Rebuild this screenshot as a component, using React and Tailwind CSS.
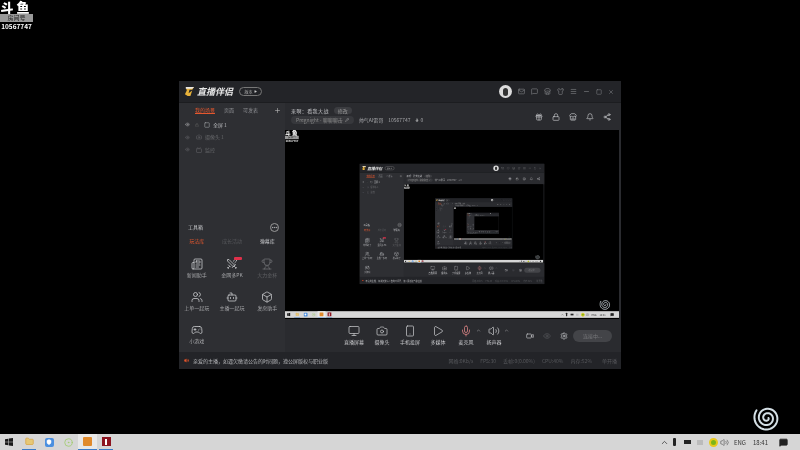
import {
  Bell, Box, Camera, Eye, Gamepad2, Gift, Lock, Mail, Menu, MessageSquare, Mic, Minus, Monitor, Newspaper,
  Pencil, Play, Plus, Settings, Share2, Shirt, Smartphone, Square, Store, Swords, Trophy, Users, Video,
  Volume2, X, Flame, Bot, ChevronUp, MessageSquareText, Ellipsis, Folder, Shield, CircleDot, Tv,
} from "lucide-react";

const FONT = "font-['Noto_Sans_CJK_SC','Noto_Sans',sans-serif]";

const tools = [
  { label: "新闻助手", icon: Newspaper },
  { label: "金网多PK", icon: Swords, badge: true },
  { label: "大力金杯", icon: Trophy, dim: true },
  { label: "上单一起玩", icon: Users },
  { label: "主播一起玩", icon: Bot },
  { label: "发房助手", icon: Box },
  { label: "小游戏", icon: Gamepad2 },
];

const controls = [
  { label: "直播屏幕", icon: Monitor },
  { label: "摄像头", icon: Camera },
  { label: "手机投屏", icon: Smartphone },
  { label: "多媒体", icon: Play },
];

// two and a half turns of an archimedean spiral
const spiralPoints = Array.from({ length: 120 }, (_, i) => {
  const a = (i / 119) * Math.PI * 5.2;
  const r = 1.5 + (i / 119) * 11.5;
  return `${(14 + r * Math.cos(a)).toFixed(2)},${(14 + r * Math.sin(a)).toFixed(2)}`;
}).join(" ");

function Spiral({ className }) {
  return (
    <svg viewBox="0 0 28 28" className={className} fill="none" stroke="#d5e0e6" strokeWidth="2" strokeLinecap="round">
      <polyline points={spiralPoints} />
    </svg>
  );
}

function Taskbar() {
  return (
    <div className="h-4 bg-[#d6d6d6] flex items-center justify-between shrink-0">
      <div className="flex items-center h-full">
        <svg viewBox="0 0 12 12" className="w-[8px] h-[8px] ml-[5px] mr-[6px]" fill="#1a1a1a">
          <path d="M0 1.700 5 1v4.500H0zM5.800.9 12 0v5.500H5.800zM0 6.300h5V11l-5-.7zM5.800 6.300H12V12l-6.200-.9z" />
        </svg>
        <div className="w-5 h-full flex items-center justify-center">
          <div className="w-[14px] h-full flex items-center justify-center border-b border-[#3a7bc8]">
            <Folder className="w-[9px] h-[9px] text-[#d9a441] fill-[#e6c877]" />
          </div>
        </div>
        <div className="w-5 h-full flex items-center justify-center">
          <div className="w-[9px] h-[9px] rounded-[2px] bg-[#4a8fe0] flex items-center justify-center">
            <Shield className="w-[6px] h-[6px] text-white fill-white" />
          </div>
        </div>
        <div className="w-[19px] h-full flex items-center justify-center">
          <CircleDot className="w-[9px] h-[9px] text-[#9ccc65]" />
        </div>
        <div className="w-[19px] h-full flex items-center justify-center bg-[#e8e8e8] border-b border-[#3a7bc8]">
          <div className="w-[9px] h-[9px] rounded-[1px] bg-[#e08a2c]" />
        </div>
        <div className="w-[14px] ml-[2px] h-full flex items-center justify-center border-b border-[#3a7bc8]">
          <div className="w-[9px] h-[9px] bg-[#8c1420] flex items-center justify-center">
            <div className="w-[2px] h-[6px] bg-white" />
          </div>
        </div>
      </div>
      <div className={`flex items-center text-[#333] text-[6px] ${FONT}`}>
        <ChevronUp className="w-[9px] h-[9px] mr-[4px]" />
        <div className="w-[3px] h-[8px] rounded-[1px] bg-[#222] mr-[8px]" />
        <div className="w-[7px] h-[4px] bg-[#222] mr-[6px]" />
        <div className="w-[6px] h-[5px] bg-[#bbb] mr-[6px]" />
        <div className="w-[9px] h-[9px] rounded-full bg-[#7cb518] border-2 border-[#e8c91c] mr-[2px]" />
        <Volume2 className="w-[9px] h-[9px] text-[#666] mr-[5px]" />
        <span className="mr-[7px]">ENG</span>
        <span className="mr-[11px]">18:41</span>
        <MessageSquareText className="w-[9px] h-[9px] text-[#222] fill-[#222] mr-[12px]" />
      </div>
    </div>
  );
}

function Sidebar() {
  return (
    <div className={`w-[106px] bg-[#2e2f33] flex flex-col shrink-0 ${FONT}`}>
      <div className="flex items-center h-[14px] pl-4 pr-[3px] text-[5px] text-[#8d8e92]">
        <span className="text-[#e4572e] border-b border-[#e4572e] mr-[9px]">我的场景</span>
        <span className="mr-[9px]">页面</span>
        <span>可发表</span>
        <Plus className="w-[7px] h-[7px] ml-auto mr-[1px] text-[#bbb]" />
      </div>
      <div className="flex flex-col gap-[4.5px] pl-[6px] pt-[3.5px] text-[5px]">
        <div className="flex items-center h-[8px] text-[#b5b6b9]">
          <Eye className="w-[5px] h-[5px] mr-[5px]" />
          <Lock className="w-[4px] h-[4px] mr-[5px] text-[#666]" />
          <Square className="w-[6px] h-[6px] mr-[3px]" />
          全屏 1
        </div>
        <div className="flex items-center h-[8px] text-[#66676a]">
          <Eye className="w-[5px] h-[5px] mr-[5px]" />
          <Camera className="w-[6px] h-[6px] ml-[1px] mr-[3px]" />
          摄像头 1
        </div>
        <div className="flex items-center h-[8px] text-[#66676a]">
          <Eye className="w-[5px] h-[5px] mr-[5px]" />
          <Tv className="w-[6px] h-[6px] ml-[1px] mr-[3px]" />
          监控
        </div>
      </div>
      <div className="mt-[68.5px] flex items-center justify-between pl-[9px] pr-[6px] h-[10px] text-[5px] text-[#c8c9cc]">
        工具箱
        <Ellipsis className="w-[9px] h-[9px] border border-[#999] rounded-full" />
      </div>
      <div className="grid grid-cols-3 mt-[2.5px] h-[13px] items-center text-center text-[5px]">
        <span className="text-[#e4572e]">玩法库</span>
        <span className="text-[#55565a]">成长活动</span>
        <span className="text-[#c8c9cc]">弹幕库</span>
      </div>
      <div className="grid grid-cols-3 gap-y-[9px] mt-[10px] text-[5px] text-[#a5a6a9]">
        {tools.map((t) => (
          <div key={t.label} className={`relative flex flex-col items-center gap-[1px] h-[24px] ${t.dim ? "opacity-40" : ""}`}>
            <t.icon className="w-[12px] h-[12px] text-[#d0d1d4]" strokeWidth={1.5} />
            {t.badge && <div className="absolute top-[-1px] left-[20px] w-[8px] h-[3px] rounded-[1px] bg-[#e0304a]" />}
            <span className="whitespace-nowrap">{t.label}</span>
          </div>
        ))}
      </div>
    </div>
  );
}

function TopBar() {
  return (
    <div className={`h-[22px] bg-[#232428] flex items-center shrink-0 border-b border-[#1c1d20] ${FONT}`}>
      <svg viewBox="0 0 12 12" className="w-[11px] h-[11px] ml-[5px] mr-[2px]">
        <path d="M2 1h9L9 4H6L5 8 9 5 7 11H4L1 9l2-4z" fill="#e8b23a" />
        <path d="M2 1h9L9 3H2z" fill="#e8e8e8" />
      </svg>
      <span className="text-[9px] font-bold italic text-[#e8e8e8] leading-none">直播伴侣</span>
      <div className="ml-[6px] w-[23px] h-[9px] rounded-full border border-[#777] flex items-center justify-center gap-[1px] text-[4px] text-[#aaa]">
        版本
        <Play className="w-[3px] h-[3px] fill-[#ccc] text-[#ccc]" />
      </div>
      <div className="ml-auto w-[13px] h-[13px] rounded-full bg-[#dcdcdc] flex items-center justify-center mr-[6px]">
        <div className="w-[5px] h-[8px] rounded-full bg-[#333]" />
      </div>
      <div className="flex items-center gap-[6px] mr-[7px] text-[#85868a]">
        <Mail className="w-[7px] h-[7px]" />
        <MessageSquare className="w-[7px] h-[7px]" />
        <Store className="w-[7px] h-[7px]" />
        <Shirt className="w-[7px] h-[7px]" />
        <Menu className="w-[7px] h-[7px]" />
        <Minus className="w-[7px] h-[7px]" />
        <Square className="w-[6px] h-[6px]" />
        <X className="w-[6px] h-[6px]" />
      </div>
    </div>
  );
}

function InfoBar() {
  return (
    <div className={`h-[27px] bg-[#2a2b2f] flex items-center shrink-0 pl-[6px] pr-[10px] text-[5px] text-[#a5a6a9] ${FONT}`}>
      <div className="flex flex-col gap-[2px] -mt-[3px]">
        <div className="flex items-center gap-[5px] text-[#c4c5c8]">
          <span className="tracking-[0.4px]">来啊：看我大战</span>
          <span className="rounded-full bg-[#3c3d41] px-[4px] text-[#999]">修改</span>
        </div>
        <div className="flex items-center gap-[5px]">
          <span className="flex items-center gap-[2px] rounded-full bg-[#37383c] px-[5px] text-[#888]">
            Pregnight - 聊聊聊击
            <Pencil className="w-[4px] h-[4px] text-[#ccc]" />
          </span>
          <span>帅气AI雷哥</span>
          <span>10567747</span>
          <span className="flex items-center gap-[1px]">
            <Flame className="w-[4px] h-[4px] fill-[#999]" />0
          </span>
        </div>
      </div>
      <div className="ml-auto flex items-center gap-[9px] text-[#c4c5c8]">
        <Gift className="w-[8px] h-[8px]" />
        <Lock className="w-[8px] h-[8px]" />
        <Store className="w-[8px] h-[8px]" />
        <Bell className="w-[8px] h-[8px]" />
        <Share2 className="w-[8px] h-[8px]" />
      </div>
    </div>
  );
}

function ControlBar() {
  return (
    <div className={`h-[33px] bg-[#2a2b2f] flex items-center shrink-0 pl-[60px] text-[5px] text-[#c4c5c8] ${FONT}`}>
      <div className="flex items-center gap-[10px]">
        {controls.map((c) => (
          <div key={c.label} className="flex flex-col items-center gap-[1px] w-[18px]">
            <c.icon className="w-[12px] h-[12px]" strokeWidth={1.5} />
            <span className="whitespace-nowrap">{c.label}</span>
          </div>
        ))}
        <div className="relative flex flex-col items-center gap-[1px] w-[18px]">
          <Mic className="w-[12px] h-[12px] text-[#e58a8a]" strokeWidth={1.5} />
          <ChevronUp className="absolute left-[19px] top-[3px] w-[5px] h-[5px]" />
          <span className="whitespace-nowrap">麦克风</span>
        </div>
        <div className="relative flex flex-col items-center gap-[1px] w-[18px]">
          <Volume2 className="w-[12px] h-[12px]" strokeWidth={1.5} />
          <ChevronUp className="absolute left-[19px] top-[3px] w-[5px] h-[5px]" />
          <span className="whitespace-nowrap">扬声器</span>
        </div>
      </div>
      <div className="flex items-center gap-[9px] ml-[23px]">
        <Video className="w-[8px] h-[8px]" />
        <Eye className="w-[8px] h-[8px] text-[#55565a]" />
        <Settings className="w-[8px] h-[8px]" />
      </div>
      <div className="ml-[5px] w-[39px] h-[12px] rounded-full bg-[#434448] flex items-center justify-center text-[#77787b]">
        连接中...
      </div>
    </div>
  );
}

function StatusBar() {
  return (
    <div className={`h-[17px] bg-[#232428] flex items-center shrink-0 pl-[5px] pr-[4px] text-[5px] text-[#b5b6b9] ${FONT}`}>
      <Volume2 className="w-[5px] h-[5px] text-[#e4572e] fill-[#e4572e] mr-[4px]" />
      <span>亲爱的主播，如遇欠缴请公告的时间题，遵公屏版权与职业版</span>
      <div className="ml-auto flex items-center gap-[7px] text-[#55565a]">
        <span>网络:0Kb/s</span>
        <span>FPS:30</span>
        <span>丢帧:0(0.00%)</span>
        <span>CPU:40%</span>
        <span>内存:52%</span>
        <span className="ml-[3px]">单开播</span>
      </div>
    </div>
  );
}

function Desktop({ depth }) {
  return (
    <div className="relative w-[800px] h-[450px] bg-black flex flex-col overflow-hidden">
      <div className="flex-1" />
      <Taskbar />
      {/* douyu watermark */}
      <div className={`absolute left-0 top-0 w-[33px] flex flex-col items-center text-white ${FONT}`}>
        <span className="h-[14px] text-[13px] font-black leading-[14px] tracking-[3px] whitespace-nowrap">斗鱼</span>
        <span className="w-[33px] bg-[#999] text-center text-[6px] leading-[8px] text-[#222]">房间号</span>
        <span className="text-[6.5px] font-bold leading-[9px]">10567747</span>
      </div>
      <Spiral className="absolute left-[753px] top-[404px] w-[28px] h-[28px]" />
      {/* app window */}
      <div className="absolute left-[179px] top-[81px] w-[442px] h-[288px] flex flex-col bg-[#2a2b2f]">
        <TopBar />
        <div className="flex flex-1 min-h-0">
          <Sidebar />
          <div className="flex-1 flex flex-col min-w-0">
            <InfoBar />
            <div className="h-[189px] mr-[2px] bg-black overflow-hidden shrink-0">
              {depth > 0 && (
                <div className="origin-top-left scale-[0.4175]">
                  <Desktop depth={depth - 1} />
                </div>
              )}
            </div>
            <ControlBar />
          </div>
        </div>
        <StatusBar />
      </div>
    </div>
  );
}

export default function App() {
  return (
    <div className="blur-[0.6px]">
      <Desktop depth={3} />
    </div>
  );
}
